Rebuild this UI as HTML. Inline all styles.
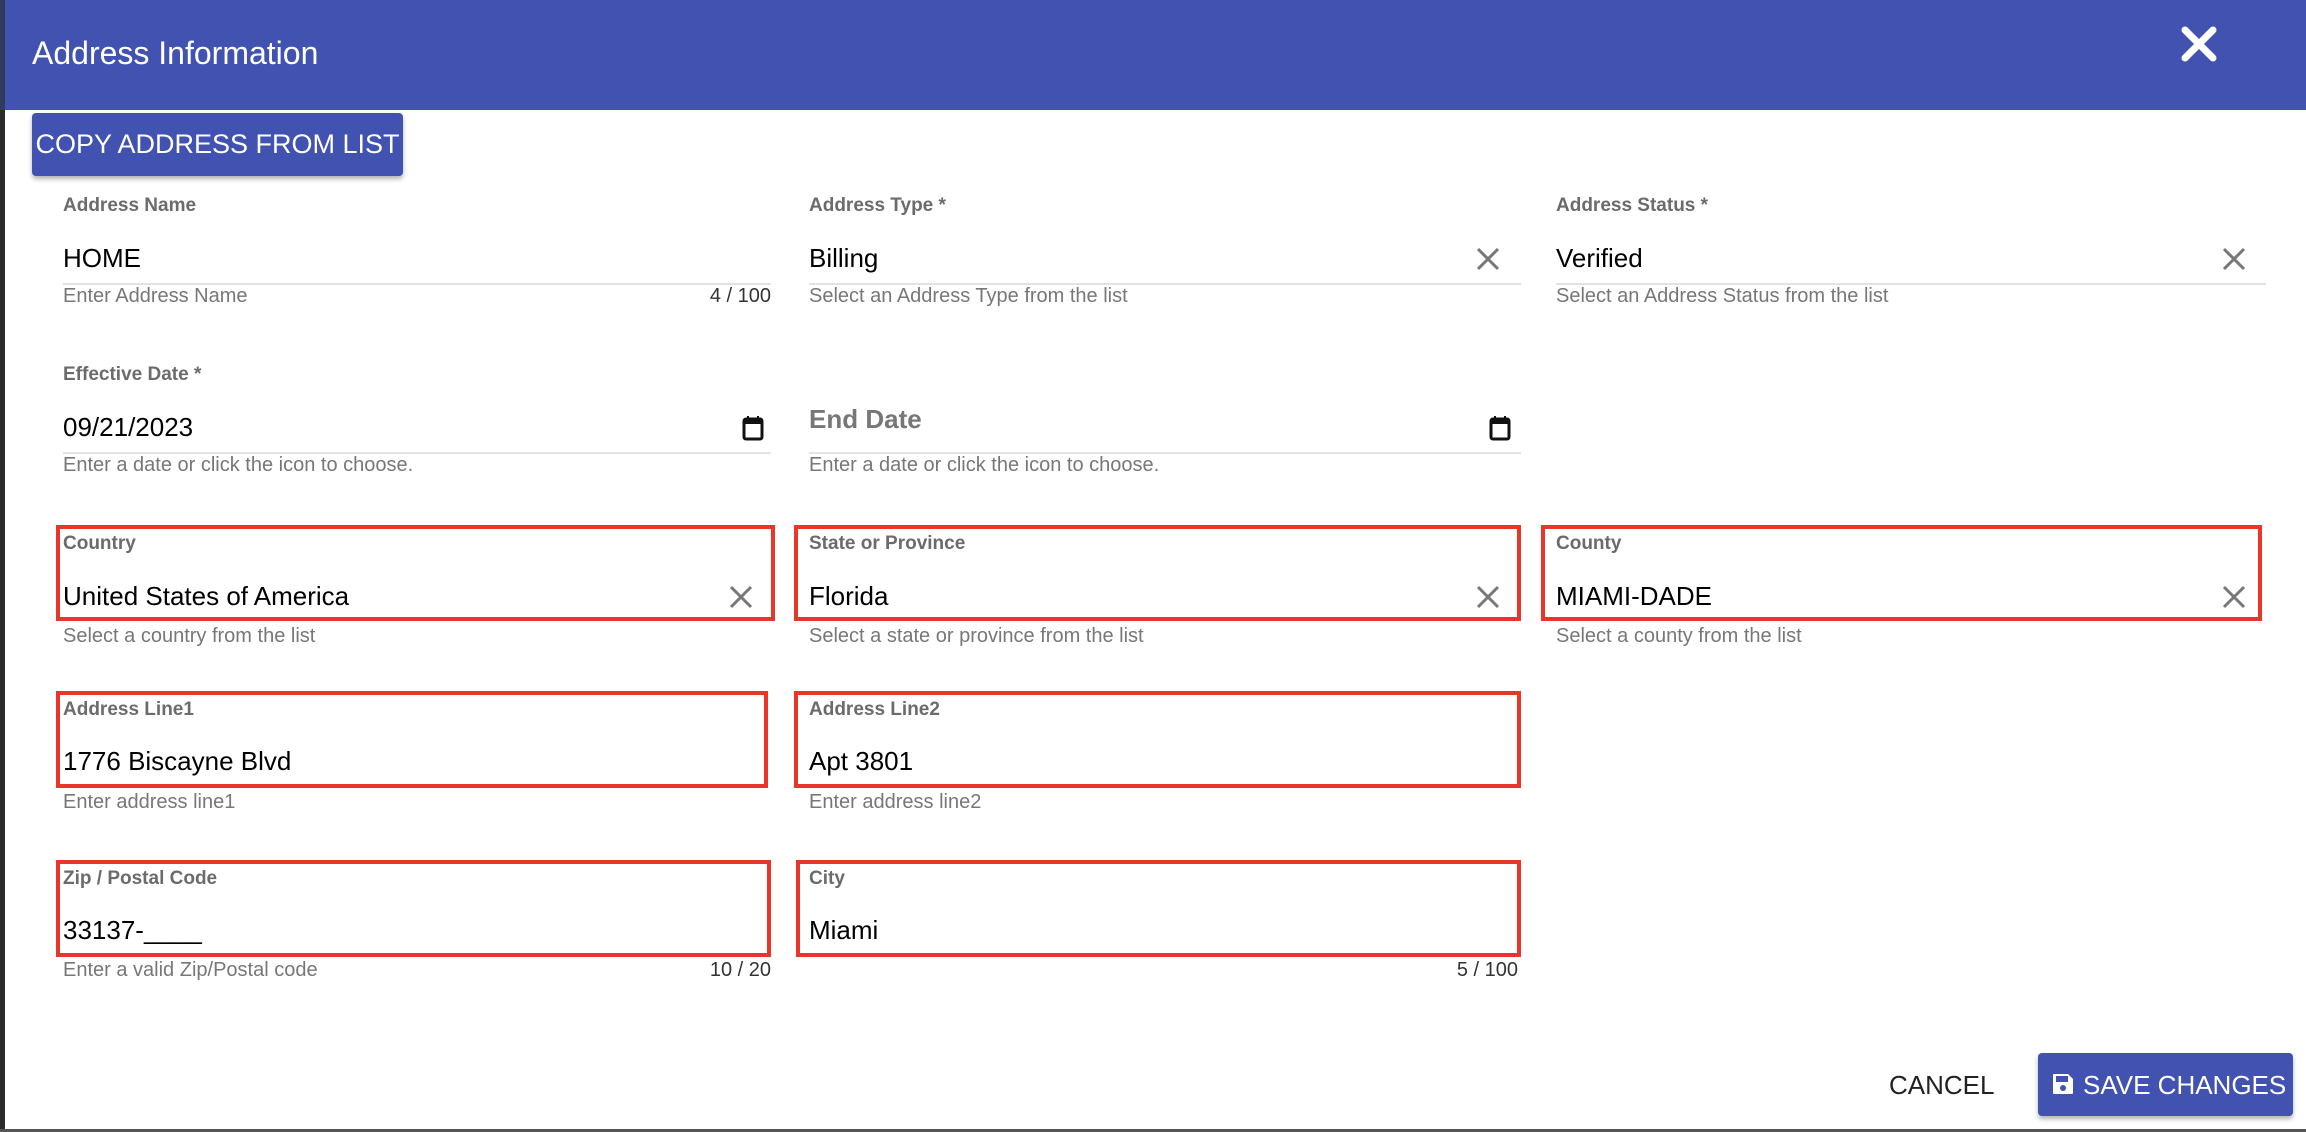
<!DOCTYPE html>
<html><head><meta charset="utf-8"><style>
*{margin:0;padding:0;box-sizing:border-box}
body{width:2306px;height:1132px;background:#fff;font-family:"Liberation Sans",sans-serif;position:relative;overflow:hidden}
.a{position:absolute;white-space:nowrap}
.hdr{left:0;top:0;width:2306px;height:110px;background:#4252b0}
.lab{font-size:19px;font-weight:bold;color:#6b6b6b}
.val{font-size:26px;color:#000}
.hlp{font-size:20px;color:#777}
.ln{height:2px;background:#e2e2e2}
.rb{border:4px solid #e8372a}
.x{width:26px;height:26px}
</style></head><body>
<div class="a" style="left:0;top:0;width:5px;height:1132px;background:#2b2b2b"></div>
<div class="a hdr"></div>
<div class="a" style="left:0;top:0;width:5px;height:110px;background:#2f3a5c"></div>
<div class="a" style="left:32px;top:35px;font-size:32px;color:#fff">Address Information</div>
<svg class="a" style="left:2181px;top:26px" width="36" height="36" viewBox="0 0 36 36"><path d="M4 4L32 32M32 4L4 32" stroke="#fff" stroke-width="7" stroke-linecap="round"/></svg>
<div class="a" style="left:32px;top:113px;width:371px;height:63px;background:#4252b0;border-radius:4px;box-shadow:0 3px 5px rgba(0,0,0,.3);color:#fff;font-size:27px;line-height:63px;text-align:center">COPY ADDRESS FROM LIST</div>

<!-- row 1 -->
<div class="a lab" style="left:63px;top:195px">Address Name</div>
<div class="a val" style="left:63px;top:243px">HOME</div>
<div class="a ln" style="left:63px;top:283px;width:708px"></div>
<div class="a hlp" style="left:63px;top:285px">Enter Address Name</div>
<div class="a hlp" style="left:700px;width:71px;text-align:right;top:285px;color:#333">4 / 100</div>

<div class="a lab" style="left:809px;top:195px">Address Type *</div>
<div class="a val" style="left:809px;top:243px">Billing</div>
<div class="a ln" style="left:809px;top:283px;width:712px"></div>
<div class="a hlp" style="left:809px;top:285px">Select an Address Type from the list</div>

<div class="a lab" style="left:1556px;top:195px">Address Status *</div>
<div class="a val" style="left:1556px;top:243px">Verified</div>
<div class="a ln" style="left:1556px;top:283px;width:710px"></div>
<div class="a hlp" style="left:1556px;top:285px">Select an Address Status from the list</div>

<!-- row 2 -->
<div class="a lab" style="left:63px;top:364px">Effective Date *</div>
<div class="a val" style="left:63px;top:412px">09/21/2023</div>
<div class="a ln" style="left:63px;top:452px;width:708px"></div>
<div class="a hlp" style="left:63px;top:454px">Enter a date or click the icon to choose.</div>

<div class="a" style="left:809px;top:404px;font-size:26px;font-weight:bold;color:#777">End Date</div>
<div class="a ln" style="left:809px;top:452px;width:712px"></div>
<div class="a hlp" style="left:809px;top:454px">Enter a date or click the icon to choose.</div>

<!-- row 3 -->
<div class="a rb" style="left:56px;top:525px;width:719px;height:96px"></div>
<div class="a lab" style="left:63px;top:533px">Country</div>
<div class="a val" style="left:63px;top:581px">United States of America</div>
<div class="a hlp" style="left:63px;top:625px">Select a country from the list</div>

<div class="a rb" style="left:794px;top:525px;width:727px;height:96px"></div>
<div class="a lab" style="left:809px;top:533px">State or Province</div>
<div class="a val" style="left:809px;top:581px">Florida</div>
<div class="a hlp" style="left:809px;top:625px">Select a state or province from the list</div>

<div class="a rb" style="left:1541px;top:525px;width:721px;height:96px"></div>
<div class="a lab" style="left:1556px;top:533px">County</div>
<div class="a val" style="left:1556px;top:581px">MIAMI-DADE</div>
<div class="a hlp" style="left:1556px;top:625px">Select a county from the list</div>

<!-- row 4 -->
<div class="a rb" style="left:56px;top:691px;width:712px;height:97px"></div>
<div class="a lab" style="left:63px;top:699px">Address Line1</div>
<div class="a val" style="left:63px;top:746px">1776 Biscayne Blvd</div>
<div class="a hlp" style="left:63px;top:791px">Enter address line1</div>

<div class="a rb" style="left:794px;top:691px;width:727px;height:97px"></div>
<div class="a lab" style="left:809px;top:699px">Address Line2</div>
<div class="a val" style="left:809px;top:746px">Apt 3801</div>
<div class="a hlp" style="left:809px;top:791px">Enter address line2</div>

<!-- row 5 -->
<div class="a rb" style="left:56px;top:860px;width:715px;height:97px"></div>
<div class="a lab" style="left:63px;top:868px">Zip / Postal Code</div>
<div class="a val" style="left:63px;top:915px">33137-____</div>
<div class="a hlp" style="left:63px;top:959px">Enter a valid Zip/Postal code</div>
<div class="a hlp" style="left:671px;width:100px;text-align:right;top:959px;color:#333">10 / 20</div>

<div class="a rb" style="left:796px;top:860px;width:725px;height:97px"></div>
<div class="a lab" style="left:809px;top:868px">City</div>
<div class="a val" style="left:809px;top:915px">Miami</div>
<div class="a hlp" style="left:1418px;width:100px;text-align:right;top:959px;color:#333">5 / 100</div>

<!-- clear icons -->
<svg class="a x" style="left:1475px;top:246px" viewBox="0 0 26 26"><path d="M3 3L23 23M23 3L3 23" stroke="#777" stroke-width="3"/></svg>
<svg class="a x" style="left:2221px;top:246px" viewBox="0 0 26 26"><path d="M3 3L23 23M23 3L3 23" stroke="#777" stroke-width="3"/></svg>
<svg class="a x" style="left:728px;top:584px" viewBox="0 0 26 26"><path d="M3 3L23 23M23 3L3 23" stroke="#777" stroke-width="3"/></svg>
<svg class="a x" style="left:1475px;top:584px" viewBox="0 0 26 26"><path d="M3 3L23 23M23 3L3 23" stroke="#777" stroke-width="3"/></svg>
<svg class="a x" style="left:2221px;top:584px" viewBox="0 0 26 26"><path d="M3 3L23 23M23 3L3 23" stroke="#777" stroke-width="3"/></svg>
<!-- calendar icons -->
<svg class="a" style="left:742px;top:415px" width="22" height="26" viewBox="0 0 22 26"><rect x="2" y="4" width="18" height="20" rx="2" fill="none" stroke="#111" stroke-width="3"/><rect x="2" y="4" width="18" height="5" fill="#111"/><path d="M6 1v4M16 1v4" stroke="#111" stroke-width="2"/></svg>
<svg class="a" style="left:1489px;top:415px" width="22" height="26" viewBox="0 0 22 26"><rect x="2" y="4" width="18" height="20" rx="2" fill="none" stroke="#111" stroke-width="3"/><rect x="2" y="4" width="18" height="5" fill="#111"/><path d="M6 1v4M16 1v4" stroke="#111" stroke-width="2"/></svg>

<!-- footer -->
<div class="a" style="left:1889px;top:1070px;font-size:26px;color:#222">CANCEL</div>
<div class="a" style="left:2038px;top:1053px;width:255px;height:63px;background:#4252b0;border-radius:4px;box-shadow:0 3px 5px rgba(0,0,0,.3)"></div>
<svg class="a" style="left:2051px;top:1072px" width="24" height="24" viewBox="0 0 24 24"><path d="M3 2h14l5 5v14a1 1 0 0 1-1 1H3a1 1 0 0 1-1-1V3a1 1 0 0 1 1-1z" fill="#fff"/><rect x="5" y="4" width="12" height="6" fill="#4252b0"/><circle cx="12" cy="16" r="3" fill="#4252b0"/></svg>
<div class="a" style="left:2083px;top:1070px;font-size:26px;color:#fff">SAVE CHANGES</div>
<div class="a" style="left:0;top:1129px;width:2306px;height:3px;background:#555"></div>
</body></html>
